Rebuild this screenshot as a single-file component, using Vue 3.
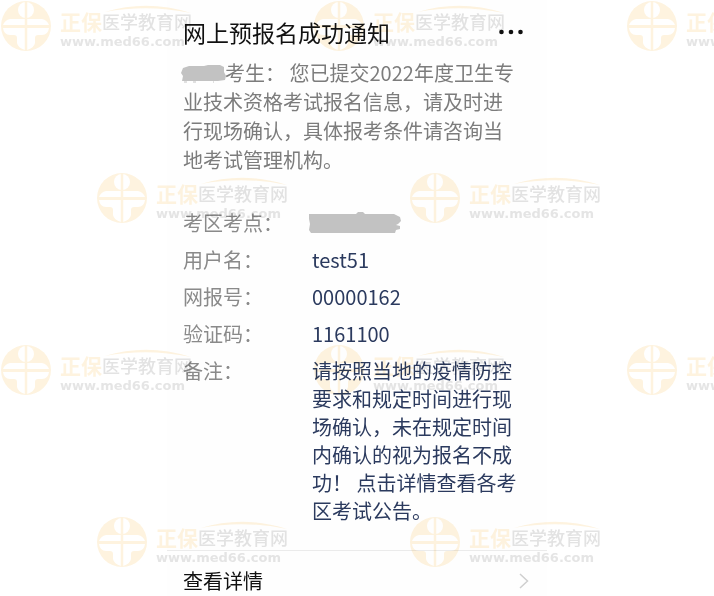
<script setup>
const fields = [
    { label: '考区考点：', value: '', hidden: true },
    { label: '用户名：', value: 'test51' },
    { label: '网报号：', value: '00000162' },
    { label: '验证码：', value: '1161100' },
    { label: '备注：', value: '请按照当地的疫情防控要求和规定时间进行现场确认，未在规定时间内确认的视为报名不成功！ 点击详情查看各考区考试公告。' },
]

// number of marks in each row
const markRows = [3, 2, 3, 2]
</script>

<template>
    <div class="page">
        <main class="card">
            <header class="card__header">
                <h1 class="card__title">网上预报名成功通知</h1>
                <button class="card__more" type="button" aria-label="更多">
                    <svg viewBox="0 0 24 6" width="24" height="6" fill="currentColor">
                        <circle cx="2.5" cy="3" r="2.3" />
                        <circle cx="12" cy="3" r="2.3" />
                        <circle cx="21.5" cy="3" r="2.3" />
                    </svg>
                </button>
            </header>

            <p class="card__text">
                <svg class="name-blot" viewBox="0 0 46 18" width="46" height="18">
                    <path d="M3 3 L9 1 L24 1 L28 0 L40 0 L44 2 L44 7 L46 11 L45 15 L38 16 L2 16 L3 11 L1 8 Z" />
                    <path d="M4 17 H7 M13 17 H16 M33 17 H34" stroke="#c2c2c2" />
                </svg>考生： 您已提交2022年度卫生专业技术资格考试报名信息，请及时进行现场确认，具体报考条件请咨询当地考试管理机构。
            </p>

            <dl class="fields">
                <template v-for="field in fields" :key="field.label">
                    <dt>{{ field.label }}</dt>
                    <dd>
                        <svg v-if="field.hidden" class="value-blot" viewBox="0 0 94 22" width="94" height="22">
                            <path d="M1 2 L48 2 L50 0 L55 0 L57 2 L86 2 L92 5 L93 9 L90 12 L88 13 L92 14 L92 17 L88 18 L87 21 L3 21 L1 18 L2 12 L1 7 Z" />
                        </svg>
                        <template v-else>{{ field.value }}</template>
                    </dd>
                </template>
            </dl>

            <a class="card__link" href="#">
                查看详情
                <svg viewBox="0 0 10 16" width="10" height="16" fill="none" stroke="#cfcfcf" stroke-width="1.5">
                    <path d="M1 1 L8.5 8 L1 15" />
                </svg>
            </a>
        </main>

        <div class="marks" aria-hidden="true">
            <div v-for="(count, row) in markRows" :key="row" class="marks__row" :class="{ '_shifted': row % 2 }">
                <div v-for="n in count" :key="n" class="mark">
                    <svg class="mark__logo" viewBox="0 0 50 50" width="50" height="50">
                        <circle cx="25" cy="25" r="25" fill="#fbd795" />
                        <g fill="#fff">
                            <circle cx="25" cy="9" r="8" />
                            <path d="M9 18 H41 Q46 19 48 24 H2 Q4 19 9 18 Z" />
                            <path d="M2 27 H48 Q47 34 41 34 H37 Q34 34 34 37 V42 Q33 47 26 49 H24 Q17 47 16 42 V37 Q16 34 13 34 H9 Q3 34 2 27 Z" />
                        </g>
                        <path d="M25 1 V49 M1 25.5 H49" stroke="#fbd795" stroke-width="2.5" />
                    </svg>
                    <div class="mark__words">
                        <svg class="mark__arc" viewBox="0 0 86 9" width="86" height="9">
                            <path d="M0 7 Q42 -6 86 8 Q42 -1 0 7 Z" fill="#fbd795" />
                        </svg>
                        <div class="mark__name"><b>正保</b><span>医学教育网</span></div>
                        <div class="mark__site">www.med66.com</div>
                    </div>
                </div>
            </div>
        </div>
    </div>
</template>

<style>
body {
    margin: 0;
    background: #fff;
}
</style>

<style scoped>
.page {
    position: relative;
    overflow: hidden;
    font-family: "Noto Sans CJK SC", sans-serif;
    font-size: 20px;
}

.card {
    box-sizing: border-box;
    max-width: 380px;
    margin: 0 auto;
    background: #fefefe;
}

.card__header {
    display: flex;
    justify-content: space-between;
    align-items: center;
    padding: 15px 24px 0 16px;
}

.card__title {
    margin: 0;
    color: #111;
    font-size: 23px;
    font-weight: 400;
    line-height: 34px;
}

.card__more {
    display: flex;
    border: none;
    padding: 0;
    color: #111;
    background: none;
    cursor: pointer;
}

.card__text {
    margin: 0;
    padding: 9px 28px 0 16px;
    color: #7c7c7c;
    line-height: 29px;
}

.name-blot,
.value-blot {
    fill: #c2c2c2;
}

.name-blot {
    margin: 0 -1px 0 -3px;
    vertical-align: -2px;
}

.value-blot {
    display: block;
    margin: 3px 0 0 -4px;
}

.fields {
    display: grid;
    grid-template-columns: 113px 1fr;
    row-gap: 9px;
    margin: 0;
    padding: 35px 24px 25px 16px;
    line-height: 28px;
}

.fields dt {
    color: #8a8a8a;
}

.fields dd {
    margin: 0 0 0 16px;
    color: #2b3a5e;
}

.card__link {
    display: flex;
    justify-content: space-between;
    align-items: center;
    border-top: 1px solid #ebebeb;
    padding: 15px 18px 1px 16px;
    color: #111;
    line-height: 29px;
    text-decoration: none;
}

.marks {
    position: absolute;
    top: 1px;
    left: 1px;
    opacity: 0.3;
    pointer-events: none;
    mix-blend-mode: multiply;
}

.marks__row {
    display: flex;
    gap: 122px;
    height: 172px;
}

.marks__row._shifted {
    padding-left: 96px;
}

.mark {
    display: flex;
    flex: none;
    gap: 9px;
    width: 191px;
}

.mark__logo {
    flex: none;
}

.mark__words {
    position: relative;
    padding-top: 7px;
    white-space: nowrap;
}

.mark__arc {
    position: absolute;
    top: 4px;
    left: 45px;
}

.mark__name {
    display: flex;
    align-items: center;
    color: #a0a0a0;
    font-size: 18px;
    font-weight: 500;
    line-height: 26px;
}

.mark__name b {
    color: #fbd795;
    font-size: 21px;
}

.mark__site {
    color: #a8a8a8;
    font-family: "DejaVu Sans", sans-serif;
    font-size: 13px;
    font-weight: 700;
    line-height: 16px;
}
</style>
